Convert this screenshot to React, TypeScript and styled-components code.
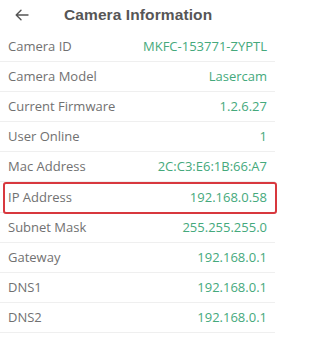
import styled, { createGlobalStyle } from 'styled-components';

const GlobalStyle = createGlobalStyle`
  html, body {
    margin: 0;
    padding: 0;
    background: #ffffff;
  }
  body {
    font-family: 'Open Sans', 'Liberation Sans', Arial, sans-serif;
  }
`;

type InfoItem = {
  label: string;
  value: string;
  highlighted?: boolean;
};

const items: InfoItem[] = [
  { label: 'Camera ID', value: 'MKFC-153771-ZYPTL' },
  { label: 'Camera Model', value: 'Lasercam' },
  { label: 'Current Firmware', value: '1.2.6.27' },
  { label: 'User Online', value: '1' },
  { label: 'Mac Address', value: '2C:C3:E6:1B:66:A7' },
  { label: 'IP Address', value: '192.168.0.58', highlighted: true },
  { label: 'Subnet Mask', value: '255.255.255.0' },
  { label: 'Gateway', value: '192.168.0.1' },
  { label: 'DNS1', value: '192.168.0.1' },
  { label: 'DNS2', value: '192.168.0.1' },
];

const BackArrow = () => (
  <svg width='14' height='12' viewBox='0 0 14 12' fill='none'>
    <path
      d='M13 6H1.5M6 1.2L1.2 6L6 10.8'
      stroke='#555'
      strokeWidth='1.4'
      strokeLinecap='round'
      strokeLinejoin='round'
    />
  </svg>
);

const App = () => {
  return (
    <Screen>
      <GlobalStyle />
      <Header>
        <BackButton>
          <BackArrow />
        </BackButton>
        <Title>Camera Information</Title>
      </Header>
      <List>
        {items.map((item) => (
          <Row key={item.label} $highlighted={item.highlighted}>
            <Label>{item.label}</Label>
            <Value>{item.value}</Value>
          </Row>
        ))}
      </List>
    </Screen>
  );
};

export default App;

const Screen = styled.div`
  width: 300px;
  height: 342px;
  background: #ffffff;
  overflow: hidden;
`;

const Header = styled.div`
  display: flex;
  align-items: center;
  height: 30px;
  padding-left: 15px;
  padding-bottom: 2px;
`;

const BackButton = styled.div`
  display: flex;
  align-items: center;
  width: 14px;
  height: 14px;
  margin-right: 35px;
`;

const Title = styled.h1`
  margin: 0;
  font-family: 'Liberation Sans', Arial, sans-serif;
  font-size: 15.5px;
  font-weight: bold;
  color: #565656;
  letter-spacing: 0.1px;
`;

const List = styled.div`
  display: flex;
  flex-direction: column;
  width: 275px;
`;

const Row = styled.div<{ $highlighted?: boolean }>`
  position: relative;
  display: flex;
  align-items: center;
  justify-content: space-between;
  height: 30.1px;
  padding: 0 8px 0 8px;
  border-bottom: 1px solid #efefef;
  box-sizing: border-box;

  ${({ $highlighted }) =>
    $highlighted &&
    `
    &::after {
      content: '';
      position: absolute;
      left: 3px;
      right: -2px;
      top: 0px;
      bottom: -2px;
      border: 2px solid #d8383e;
      border-radius: 3px;
    }
  `}
`;

const Label = styled.span`
  font-size: 13px;
  line-height: 1;
  color: #717171;
`;

const Value = styled.span`
  font-size: 13px;
  line-height: 1;
  color: #45a97c;
`;
